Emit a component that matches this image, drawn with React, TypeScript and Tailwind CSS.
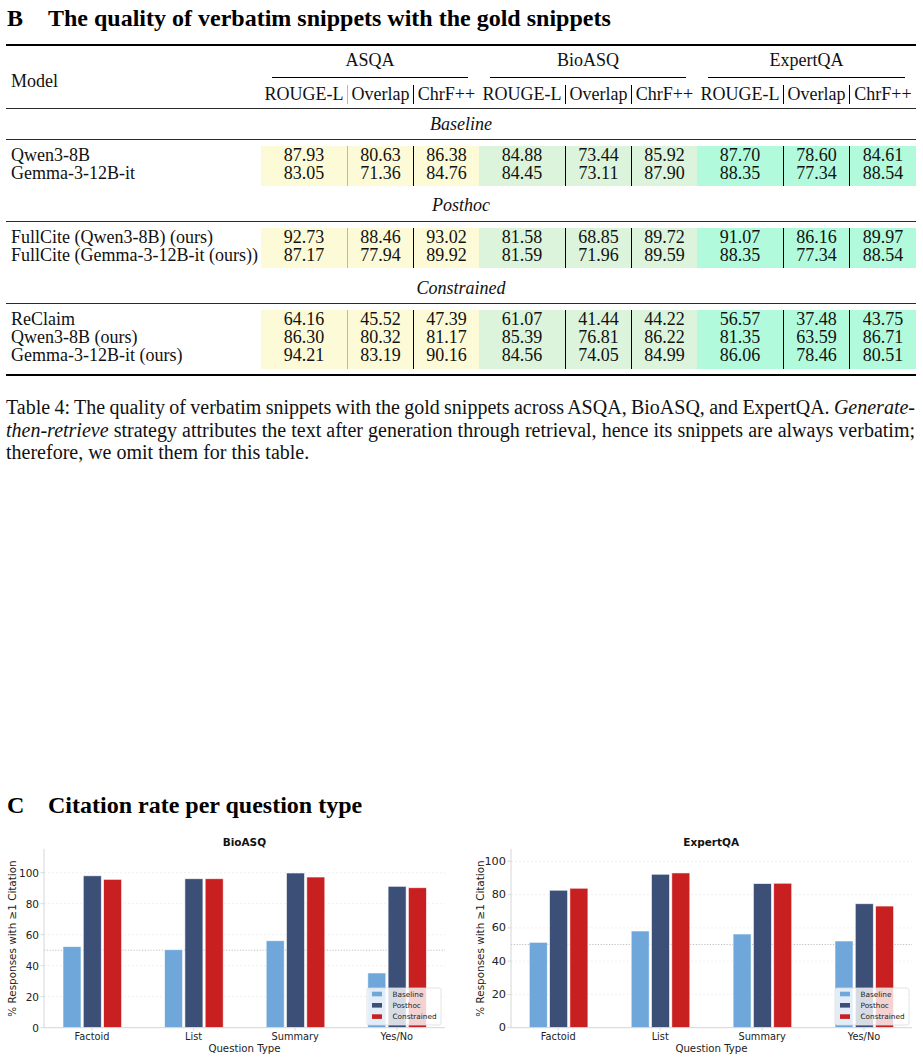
import React from "react";

const COLS =
  "grid grid-cols-[255px_86px_66px_66px_86px_66px_66px_86px_66px_67px]";

const BG = ["bg-[#fdfad7]", "bg-[#dcf4db]", "bg-[#b1fbdc]"];

// divider on the left of each of the 9 metric columns
const DIV = [
  "",
  "border-l border-[#c2b99c]",
  "border-l border-black",
  "",
  "border-l border-black",
  "border-l border-black",
  "",
  "border-l border-black",
  "border-l border-black",
];

const SUBS = ["ROUGE-L", "Overlap", "ChrF++"];

const sections = [
  {
    name: "Baseline",
    label: "h-[30px]",
    inner: "pb-[4px]",
    outer: "pb-[4px]",
    rows: [
      ["Qwen3-8B", "87.93", "80.63", "86.38", "84.88", "73.44", "85.92", "87.70", "78.60", "84.61"],
      ["Gemma-3-12B-it", "83.05", "71.36", "84.76", "84.45", "73.11", "87.90", "88.35", "77.34", "88.54"],
    ],
  },
  {
    name: "Posthoc",
    label: "h-[31px]",
    inner: "pb-[4px]",
    outer: "pb-[5px]",
    rows: [
      ["FullCite (Qwen3-8B) (ours)", "92.73", "88.46", "93.02", "81.58", "68.85", "89.72", "91.07", "86.16", "89.97"],
      ["FullCite (Gemma-3-12B-it (ours))", "87.17", "77.94", "89.92", "81.59", "71.96", "89.59", "88.35", "77.34", "88.54"],
    ],
  },
  {
    name: "Constrained",
    label: "h-[30px]",
    inner: "pb-[5px]",
    outer: "pb-[5px]",
    rows: [
      ["ReClaim", "64.16", "45.52", "47.39", "61.07", "41.44", "44.22", "56.57", "37.48", "43.75"],
      ["Qwen3-8B (ours)", "86.30", "80.32", "81.17", "85.39", "76.81", "86.22", "81.35", "63.59", "86.71"],
      ["Gemma-3-12B-it (ours)", "94.21", "83.19", "90.16", "84.56", "74.05", "84.99", "86.06", "78.46", "80.51"],
    ],
  },
];

const Rule = () => <div className="h-px bg-[#2a2a2a]" />;

type SectionProps = {
  name: string;
  label: string;
  inner: string;
  outer: string;
  rows: string[][];
};

const Section = ({ name, label, inner, outer, rows }: SectionProps) => (
  <>
    <div className={`${label} flex items-center justify-center italic`}>{name}</div>
    <Rule />
    <div className={`${COLS} pt-[6px] ${outer}`}>
      <div className="pl-[5px]">
        {rows.map((r) => (
          <div key={r[0]} className="h-[18px] leading-[18px] whitespace-nowrap">
            {r[0]}
          </div>
        ))}
      </div>
      {Array.from({ length: 9 }).map((_, c) => (
        <div key={c} className={`${BG[Math.floor(c / 3)]} ${DIV[c]} ${inner}`}>
          {rows.map((r) => (
            <div key={r[0]} className="h-[18px] leading-[18px] text-center">
              {r[c + 1]}
            </div>
          ))}
        </div>
      ))}
    </div>
  </>
);

const Table = () => (
  <div className="ml-[6px] w-[910px] text-[18px] text-[#111]">
    <div className="h-[2px] bg-black" />
    <div className={COLS}>
      <div className="row-span-2 pl-[5px] pt-[26px] leading-[18px]">Model</div>
      {["ASQA", "BioASQ", "ExpertQA"].map((g) => (
        <div key={g} className="col-span-3 flex flex-col">
          <div className="mt-[5px] h-[18px] leading-[18px] text-center">{g}</div>
          <div className="mt-[8px] mx-[11px] h-px bg-black" />
        </div>
      ))}
      {Array.from({ length: 9 }).map((_, c) => (
        <div key={c} className="pt-[7px] pb-[4px]">
          <div className={`h-[19px] leading-[19px] text-center whitespace-nowrap ${DIV[c]}`}>
            {SUBS[c % 3]}
          </div>
        </div>
      ))}
    </div>
    <Rule />
    {sections.map((s) => (
      <Section key={s.name} {...s} />
    ))}
    <div className="h-[2px] bg-black" />
  </div>
);

type ChartProps = {
  title: string;
  width: number;
  axisX: number;
  xEnd: number;
  zeroY: number;
  unit: number;
  barStart: number;
  spacing: number;
  tickSize: number;
  labelX: number;
  legendX: number;
  data: number[][];
};

const COLORS = ["#6fa7da", "#3b4f77", "#c81f21"];
const CATS = ["Factoid", "List", "Summary", "Yes/No"];
const NAMES = ["Baseline", "Posthoc", "Constrained"];

const Chart = (p: ChartProps) => {
  const y = (v: number) => p.zeroY - v * p.unit;
  const cx = (i: number) => p.barStart + i * p.spacing + 29;
  return (
    <svg width={p.width} height={231} className="block" fontFamily="DejaVu Sans, sans-serif">
      <text x={cx(0) + (cx(3) - cx(0)) / 2} y={12} fontSize={10.5} fontWeight="bold" textAnchor="middle" dominantBaseline="central" fill="#111">
        {p.title}
      </text>
      {[20, 40, 60, 80, 100].map((v) => (
        <line key={v} x1={p.axisX} x2={p.xEnd} y1={y(v)} y2={y(v)} stroke="#ececec" strokeWidth={0.8} strokeDasharray="2 2" />
      ))}
      <line x1={p.axisX} x2={p.xEnd} y1={y(50)} y2={y(50)} stroke="#b8b8b8" strokeWidth={0.9} strokeDasharray="1.2 1.6" />
      {p.data.map((g, i) =>
        g.map((v, k) => (
          <rect
            key={`${i}-${k}`}
            x={p.barStart + i * p.spacing + k * 20.3}
            y={y(v)}
            width={18}
            height={v * p.unit}
            fill={COLORS[k]}
            stroke="#ffffff"
            strokeOpacity={0.7}
            strokeWidth={0.8}
          />
        ))
      )}
      <line x1={p.axisX} x2={p.axisX} y1={19} y2={p.zeroY} stroke="#d6d6d6" strokeWidth={1} />
      <line x1={p.axisX} x2={p.xEnd} y1={p.zeroY} y2={p.zeroY} stroke="#d6d6d6" strokeWidth={1} />
      {[0, 20, 40, 60, 80, 100].map((v) => (
        <g key={v}>
          <line x1={p.axisX - 3.5} x2={p.axisX} y1={y(v)} y2={y(v)} stroke="#d0d0d0" strokeWidth={0.8} />
          <text x={p.axisX - 5} y={y(v)} fontSize={p.tickSize} textAnchor="end" dominantBaseline="central" fill="#222">
            {v}
          </text>
        </g>
      ))}
      {CATS.map((c, i) => (
        <g key={c}>
          <line x1={cx(i)} x2={cx(i)} y1={p.zeroY} y2={p.zeroY + 3} stroke="#d0d0d0" strokeWidth={0.8} />
          <text x={cx(i)} y={p.zeroY + 9} fontSize={9.8} textAnchor="middle" dominantBaseline="central" fill="#222">
            {c}
          </text>
        </g>
      ))}
      <text x={(p.axisX + p.xEnd) / 2} y={218} fontSize={10.2} textAnchor="middle" dominantBaseline="central" fill="#222">
        Question Type
      </text>
      <text
        x={p.labelX}
        y={108.5}
        fontSize={10.4}
        textAnchor="middle"
        dominantBaseline="central"
        fill="#222"
        transform={`rotate(-90 ${p.labelX} 108.5)`}
      >
        % Responses with ≥1 Citation
      </text>
      <rect x={p.legendX} y={158} width={74} height={37} rx={2} fill="#ffffff" fillOpacity={0.8} stroke="#dcdcdc" strokeWidth={0.8} />
      {NAMES.map((n, k) => (
        <g key={n}>
          <rect x={p.legendX + 5} y={158 + 6 + k * 11.3 - 2.3} width={10} height={4.6} fill={COLORS[k]} />
          <text x={p.legendX + 25.5} y={158 + 6 + k * 11.3} fontSize={7.3} dominantBaseline="central" fill="#222">
            {n}
          </text>
        </g>
      ))}
    </svg>
  );
};

const bioasq = [
  [52.3, 98, 95.7],
  [50.3, 96.1, 96.1],
  [56.1, 99.8, 97.2],
  [35.3, 91.2, 90.3],
];

const expertqa = [
  [51.3, 82.6, 83.8],
  [58.1, 92.2, 93],
  [56.3, 86.6, 86.8],
  [52.1, 74.5, 73.1],
];

export default function App() {
  return (
    <div className="w-[923px] h-[1061px] bg-white overflow-hidden text-black font-['Liberation_Serif','Times_New_Roman',serif]">
      {/* B heading */}
      <div className="mt-[4px] flex h-[28px] items-center text-[24px] font-bold leading-[28px]">
        <span className="ml-[7px] w-[41px]">B</span>
        <span>The quality of verbatim snippets with the gold snippets</span>
      </div>

      <div className="mt-[12px]">
        <Table />
      </div>

      {/* caption */}
      <div className="ml-[6px] mt-[20px] w-[909px] text-[20px] leading-[22.5px] text-[#111]">
        <div className="whitespace-nowrap text-justify [text-align-last:justify] [word-spacing:-3px]">
          Table 4: The quality of verbatim snippets with the gold snippets across ASQA, BioASQ, and ExpertQA. <i>Generate-</i>
        </div>
        <div className="text-justify [text-align-last:justify]">
          <i>then-retrieve</i> strategy attributes the text after generation through retrieval, hence its snippets are always verbatim;
        </div>
        <div>therefore, we omit them for this table.</div>
      </div>

      {/* C heading */}
      <div className="mt-[327px] flex h-[28px] items-center text-[24px] font-bold leading-[28px]">
        <span className="ml-[7px] w-[41px]">C</span>
        <span>Citation rate per question type</span>
      </div>

      <div className="mt-[11px] flex">
        <Chart
          title="BioASQ"
          width={460}
          axisX={44}
          xEnd={445}
          zeroY={197.7}
          unit={1.55}
          barStart={63}
          spacing={101.6}
          tickSize={10.5}
          labelX={12}
          legendX={367}
          data={bioasq}
        />
        <Chart
          title="ExpertQA"
          width={463}
          axisX={51}
          xEnd={452}
          zeroY={197.7}
          unit={1.664}
          barStart={69.3}
          spacing={101.9}
          tickSize={11.3}
          labelX={20}
          legendX={375}
          data={expertqa}
        />
      </div>
    </div>
  );
}
